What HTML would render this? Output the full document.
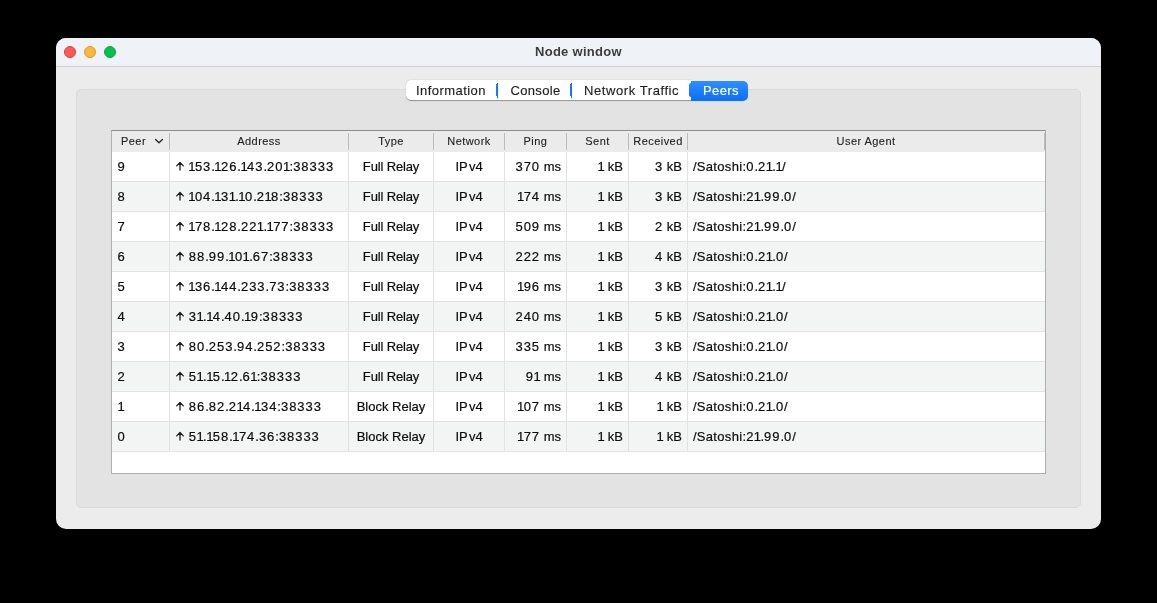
<!DOCTYPE html>
<html><head><meta charset="utf-8">
<style>
*{margin:0;padding:0;box-sizing:border-box}
html,body{width:1157px;height:603px;background:#000;overflow:hidden;font-family:"Liberation Sans",sans-serif}
.win{will-change:transform}
.win{position:absolute;left:56px;top:38px;width:1045px;height:491px;border-radius:10px;background:#ececec;overflow:hidden}
.tb{position:absolute;left:0;top:0;width:1045px;height:29px;background:#eff2f7;border-bottom:1px solid #cfcfcf}
.tl{position:absolute;top:8px;width:12px;height:12px;border-radius:50%}
.title{position:absolute;left:479px;top:6px;font-weight:bold;font-size:13px;color:#3c3c3c;line-height:16px;letter-spacing:.28px;white-space:nowrap}
.grp{position:absolute;left:20px;top:51px;width:1005px;height:419px;border-radius:5px;background:#e3e3e3;border:1px solid #dadada}
.tabs{position:absolute;left:350px;top:42px;width:342px;height:20px}
.tabbg{position:absolute;left:0;top:0;width:286px;height:20px;background:#fff;border-radius:5px 0 0 5px;box-shadow:0 0.5px 1px rgba(0,0,0,.35)}
.tab{position:absolute;top:1px;height:20px;line-height:20px;font-size:13px;color:#1e1e1e;-webkit-text-stroke:.15px currentColor;white-space:nowrap}
.sel{position:absolute;left:285px;top:1px;width:57px;height:20px;border-radius:0 5px 5px 0;background:linear-gradient(#2f8efe,#0b6ffa)}
.bump{position:absolute;left:283px;top:3px;width:3px;height:14px;border-radius:2px 0 0 2px;background:linear-gradient(#2a8afe,#0e71fa)}
.sepa{position:absolute;top:2.5px;width:1px;height:15px;background:#0f74f8}
.sepb{position:absolute;top:4px;width:1px;height:11.5px;background:#1f7cf8}
.sepg{position:absolute;top:0;width:1px;height:20px;background:#e4e4e4}
.tbl{position:absolute;left:55px;top:92px;width:935px;height:344px;background:#fff;border:1px solid #afafaf;border-top-color:#8c8c8c}
.hdr{position:absolute;left:0;top:0;width:933px;height:21px;background:#ebebeb}
.h{position:absolute;top:0;height:20px;line-height:20px;font-size:11px;color:#1f1f1f;-webkit-text-stroke:.12px #1f1f1f;text-align:center;letter-spacing:.45px;white-space:nowrap}
.hl{text-align:left;padding-left:9px}
.chev{position:absolute;left:42px;top:7px}
.hs{position:absolute;top:2px;width:1px;height:17px;background:#bcbcbc}
.row{position:absolute;left:0;width:933px;height:30px;border-bottom:1px solid #e3e3e3;background:#fff}
.row.alt{background:#f3f4f4}
.c{position:absolute;top:0;height:29px;line-height:29px;font-size:13px;color:#0c0c0c;-webkit-text-stroke:.2px #0c0c0c;white-space:nowrap;padding:0 5px}
.al{text-align:left}.ar{text-align:right}.ac{text-align:center}
.vg{position:absolute;top:21px;width:1px;height:300px;background:#e3e3e3}
.up{position:absolute;left:5px;top:9px}
b{font-weight:normal}
.d{letter-spacing:.95px}
.o{letter-spacing:-.6px;margin-left:-.55px}
.sa{letter-spacing:.37px}
.fr{letter-spacing:-.15px}
.v4{margin-left:1.2px}
</style></head><body>
<div class="win">
  <div class="tb">
    <div class="tl" style="left:8px;background:#fe5a55;border:0.5px solid #e03c36"></div>
    <div class="tl" style="left:28px;background:#fdb73c;border:0.5px solid #de9a1e"></div>
    <div class="tl" style="left:48px;background:#03c24f;border:0.5px solid #04a83d"></div>
    <div class="title">Node window</div>
  </div>
  <div class="grp"></div>
  <div class="tabs">
    <div class="tabbg"></div>
    <div class="tab" style="left:10px;letter-spacing:.45px">Information</div>
    <div class="sepg" style="left:91px"></div><div class="sepb" style="left:90px"></div><div class="sepa" style="left:91px"></div>
    <div class="tab" style="left:104.5px;letter-spacing:.33px">Console</div>
    <div class="sepg" style="left:165px"></div><div class="sepb" style="left:164px"></div><div class="sepa" style="left:165px"></div>
    <div class="tab" style="left:178px;letter-spacing:.58px">Network Traffic</div>
    <div class="bump"></div><div class="sel"></div>
    <div class="tab" style="left:297px;color:#fff;letter-spacing:.4px">Peers</div>
  </div>
  <div class="tbl">
    <div class="hdr"><div class="h hl" style="left:0px;width:57px">Peer</div><svg class="chev" width="10" height="7" viewBox="0 0 10 7"><path d="M1.6 1.5L5 4.7 8.4 1.5" fill="none" stroke="#2a2a2a" stroke-width="1.4" stroke-linecap="round" stroke-linejoin="round"/></svg><div class="h" style="left:58px;width:178px">Address</div><div class="h" style="left:237px;width:84px">Type</div><div class="h" style="left:322px;width:70px">Network</div><div class="h" style="left:393px;width:61px">Ping</div><div class="h" style="left:455px;width:61px">Sent</div><div class="h" style="left:517px;width:58px">Received</div><div class="h" style="left:576px;width:356px">User Agent</div><div class="hs" style="left:57px"></div><div class="hs" style="left:236px"></div><div class="hs" style="left:321px"></div><div class="hs" style="left:392px"></div><div class="hs" style="left:454px"></div><div class="hs" style="left:516px"></div><div class="hs" style="left:575px"></div><div class="hs" style="left:932px"></div></div>
    <div class="row" style="top:21px"><div class="c al" style="left:0px;width:57px;padding-left:5.5px">9</div><div class="c al" style="left:58px;width:178px;padding-left:18.8px"><svg class="up" width="10" height="11" viewBox="0 0 10 11"><path d="M5 1.8V9.1M1.7 4.9L5 1.5 8.3 4.9" fill="none" stroke="#1a1a1a" stroke-width="1.3" stroke-linecap="round" stroke-linejoin="round"/></svg><b class="o">1</b><b class="d">53</b>.<b class="o">1</b><b class="d">26</b>.<b class="o">1</b><b class="d">43</b>.<b class="d">20</b><b class="o">1</b>:<b class="d">38333</b></div><div class="c ac" style="left:237px;width:84px"><span class="fr">Full Relay</span></div><div class="c ac" style="left:322px;width:70px">IP<span class="v4">v4</span></div><div class="c ar" style="left:393px;width:61px"><b class="d">370</b> ms</div><div class="c ar" style="left:455px;width:61px"><b class="o">1</b> kB</div><div class="c ar" style="left:517px;width:58px"><b class="d">3</b> kB</div><div class="c al" style="left:576px;width:356px">/<span class="sa">Satoshi</span>:<b class="d">0</b>.<b class="d">2</b><b class="o">1</b>.<b class="o">1</b>/</div></div><div class="row alt" style="top:51px"><div class="c al" style="left:0px;width:57px;padding-left:5.5px">8</div><div class="c al" style="left:58px;width:178px;padding-left:18.8px"><svg class="up" width="10" height="11" viewBox="0 0 10 11"><path d="M5 1.8V9.1M1.7 4.9L5 1.5 8.3 4.9" fill="none" stroke="#1a1a1a" stroke-width="1.3" stroke-linecap="round" stroke-linejoin="round"/></svg><b class="o">1</b><b class="d">04</b>.<b class="o">1</b><b class="d">3</b><b class="o">1</b>.<b class="o">1</b><b class="d">0</b>.<b class="d">2</b><b class="o">1</b><b class="d">8</b>:<b class="d">38333</b></div><div class="c ac" style="left:237px;width:84px"><span class="fr">Full Relay</span></div><div class="c ac" style="left:322px;width:70px">IP<span class="v4">v4</span></div><div class="c ar" style="left:393px;width:61px"><b class="o">1</b><b class="d">74</b> ms</div><div class="c ar" style="left:455px;width:61px"><b class="o">1</b> kB</div><div class="c ar" style="left:517px;width:58px"><b class="d">3</b> kB</div><div class="c al" style="left:576px;width:356px">/<span class="sa">Satoshi</span>:<b class="d">2</b><b class="o">1</b>.<b class="d">99</b>.<b class="d">0</b>/</div></div><div class="row" style="top:81px"><div class="c al" style="left:0px;width:57px;padding-left:5.5px">7</div><div class="c al" style="left:58px;width:178px;padding-left:18.8px"><svg class="up" width="10" height="11" viewBox="0 0 10 11"><path d="M5 1.8V9.1M1.7 4.9L5 1.5 8.3 4.9" fill="none" stroke="#1a1a1a" stroke-width="1.3" stroke-linecap="round" stroke-linejoin="round"/></svg><b class="o">1</b><b class="d">78</b>.<b class="o">1</b><b class="d">28</b>.<b class="d">22</b><b class="o">1</b>.<b class="o">1</b><b class="d">77</b>:<b class="d">38333</b></div><div class="c ac" style="left:237px;width:84px"><span class="fr">Full Relay</span></div><div class="c ac" style="left:322px;width:70px">IP<span class="v4">v4</span></div><div class="c ar" style="left:393px;width:61px"><b class="d">509</b> ms</div><div class="c ar" style="left:455px;width:61px"><b class="o">1</b> kB</div><div class="c ar" style="left:517px;width:58px"><b class="d">2</b> kB</div><div class="c al" style="left:576px;width:356px">/<span class="sa">Satoshi</span>:<b class="d">2</b><b class="o">1</b>.<b class="d">99</b>.<b class="d">0</b>/</div></div><div class="row alt" style="top:111px"><div class="c al" style="left:0px;width:57px;padding-left:5.5px">6</div><div class="c al" style="left:58px;width:178px;padding-left:18.8px"><svg class="up" width="10" height="11" viewBox="0 0 10 11"><path d="M5 1.8V9.1M1.7 4.9L5 1.5 8.3 4.9" fill="none" stroke="#1a1a1a" stroke-width="1.3" stroke-linecap="round" stroke-linejoin="round"/></svg><b class="d">88</b>.<b class="d">99</b>.<b class="o">1</b><b class="d">0</b><b class="o">1</b>.<b class="d">67</b>:<b class="d">38333</b></div><div class="c ac" style="left:237px;width:84px"><span class="fr">Full Relay</span></div><div class="c ac" style="left:322px;width:70px">IP<span class="v4">v4</span></div><div class="c ar" style="left:393px;width:61px"><b class="d">222</b> ms</div><div class="c ar" style="left:455px;width:61px"><b class="o">1</b> kB</div><div class="c ar" style="left:517px;width:58px"><b class="d">4</b> kB</div><div class="c al" style="left:576px;width:356px">/<span class="sa">Satoshi</span>:<b class="d">0</b>.<b class="d">2</b><b class="o">1</b>.<b class="d">0</b>/</div></div><div class="row" style="top:141px"><div class="c al" style="left:0px;width:57px;padding-left:5.5px">5</div><div class="c al" style="left:58px;width:178px;padding-left:18.8px"><svg class="up" width="10" height="11" viewBox="0 0 10 11"><path d="M5 1.8V9.1M1.7 4.9L5 1.5 8.3 4.9" fill="none" stroke="#1a1a1a" stroke-width="1.3" stroke-linecap="round" stroke-linejoin="round"/></svg><b class="o">1</b><b class="d">36</b>.<b class="o">1</b><b class="d">44</b>.<b class="d">233</b>.<b class="d">73</b>:<b class="d">38333</b></div><div class="c ac" style="left:237px;width:84px"><span class="fr">Full Relay</span></div><div class="c ac" style="left:322px;width:70px">IP<span class="v4">v4</span></div><div class="c ar" style="left:393px;width:61px"><b class="o">1</b><b class="d">96</b> ms</div><div class="c ar" style="left:455px;width:61px"><b class="o">1</b> kB</div><div class="c ar" style="left:517px;width:58px"><b class="d">3</b> kB</div><div class="c al" style="left:576px;width:356px">/<span class="sa">Satoshi</span>:<b class="d">0</b>.<b class="d">2</b><b class="o">1</b>.<b class="o">1</b>/</div></div><div class="row alt" style="top:171px"><div class="c al" style="left:0px;width:57px;padding-left:5.5px">4</div><div class="c al" style="left:58px;width:178px;padding-left:18.8px"><svg class="up" width="10" height="11" viewBox="0 0 10 11"><path d="M5 1.8V9.1M1.7 4.9L5 1.5 8.3 4.9" fill="none" stroke="#1a1a1a" stroke-width="1.3" stroke-linecap="round" stroke-linejoin="round"/></svg><b class="d">3</b><b class="o">1</b>.<b class="o">1</b><b class="d">4</b>.<b class="d">40</b>.<b class="o">1</b><b class="d">9</b>:<b class="d">38333</b></div><div class="c ac" style="left:237px;width:84px"><span class="fr">Full Relay</span></div><div class="c ac" style="left:322px;width:70px">IP<span class="v4">v4</span></div><div class="c ar" style="left:393px;width:61px"><b class="d">240</b> ms</div><div class="c ar" style="left:455px;width:61px"><b class="o">1</b> kB</div><div class="c ar" style="left:517px;width:58px"><b class="d">5</b> kB</div><div class="c al" style="left:576px;width:356px">/<span class="sa">Satoshi</span>:<b class="d">0</b>.<b class="d">2</b><b class="o">1</b>.<b class="d">0</b>/</div></div><div class="row" style="top:201px"><div class="c al" style="left:0px;width:57px;padding-left:5.5px">3</div><div class="c al" style="left:58px;width:178px;padding-left:18.8px"><svg class="up" width="10" height="11" viewBox="0 0 10 11"><path d="M5 1.8V9.1M1.7 4.9L5 1.5 8.3 4.9" fill="none" stroke="#1a1a1a" stroke-width="1.3" stroke-linecap="round" stroke-linejoin="round"/></svg><b class="d">80</b>.<b class="d">253</b>.<b class="d">94</b>.<b class="d">252</b>:<b class="d">38333</b></div><div class="c ac" style="left:237px;width:84px"><span class="fr">Full Relay</span></div><div class="c ac" style="left:322px;width:70px">IP<span class="v4">v4</span></div><div class="c ar" style="left:393px;width:61px"><b class="d">335</b> ms</div><div class="c ar" style="left:455px;width:61px"><b class="o">1</b> kB</div><div class="c ar" style="left:517px;width:58px"><b class="d">3</b> kB</div><div class="c al" style="left:576px;width:356px">/<span class="sa">Satoshi</span>:<b class="d">0</b>.<b class="d">2</b><b class="o">1</b>.<b class="d">0</b>/</div></div><div class="row alt" style="top:231px"><div class="c al" style="left:0px;width:57px;padding-left:5.5px">2</div><div class="c al" style="left:58px;width:178px;padding-left:18.8px"><svg class="up" width="10" height="11" viewBox="0 0 10 11"><path d="M5 1.8V9.1M1.7 4.9L5 1.5 8.3 4.9" fill="none" stroke="#1a1a1a" stroke-width="1.3" stroke-linecap="round" stroke-linejoin="round"/></svg><b class="d">5</b><b class="o">1</b>.<b class="o">1</b><b class="d">5</b>.<b class="o">1</b><b class="d">2</b>.<b class="d">6</b><b class="o">1</b>:<b class="d">38333</b></div><div class="c ac" style="left:237px;width:84px"><span class="fr">Full Relay</span></div><div class="c ac" style="left:322px;width:70px">IP<span class="v4">v4</span></div><div class="c ar" style="left:393px;width:61px"><b class="d">9</b><b class="o">1</b> ms</div><div class="c ar" style="left:455px;width:61px"><b class="o">1</b> kB</div><div class="c ar" style="left:517px;width:58px"><b class="d">4</b> kB</div><div class="c al" style="left:576px;width:356px">/<span class="sa">Satoshi</span>:<b class="d">0</b>.<b class="d">2</b><b class="o">1</b>.<b class="d">0</b>/</div></div><div class="row" style="top:261px"><div class="c al" style="left:0px;width:57px;padding-left:5.5px">1</div><div class="c al" style="left:58px;width:178px;padding-left:18.8px"><svg class="up" width="10" height="11" viewBox="0 0 10 11"><path d="M5 1.8V9.1M1.7 4.9L5 1.5 8.3 4.9" fill="none" stroke="#1a1a1a" stroke-width="1.3" stroke-linecap="round" stroke-linejoin="round"/></svg><b class="d">86</b>.<b class="d">82</b>.<b class="d">2</b><b class="o">1</b><b class="d">4</b>.<b class="o">1</b><b class="d">34</b>:<b class="d">38333</b></div><div class="c ac" style="left:237px;width:84px">Block Relay</div><div class="c ac" style="left:322px;width:70px">IP<span class="v4">v4</span></div><div class="c ar" style="left:393px;width:61px"><b class="o">1</b><b class="d">07</b> ms</div><div class="c ar" style="left:455px;width:61px"><b class="o">1</b> kB</div><div class="c ar" style="left:517px;width:58px"><b class="o">1</b> kB</div><div class="c al" style="left:576px;width:356px">/<span class="sa">Satoshi</span>:<b class="d">0</b>.<b class="d">2</b><b class="o">1</b>.<b class="d">0</b>/</div></div><div class="row alt" style="top:291px"><div class="c al" style="left:0px;width:57px;padding-left:5.5px">0</div><div class="c al" style="left:58px;width:178px;padding-left:18.8px"><svg class="up" width="10" height="11" viewBox="0 0 10 11"><path d="M5 1.8V9.1M1.7 4.9L5 1.5 8.3 4.9" fill="none" stroke="#1a1a1a" stroke-width="1.3" stroke-linecap="round" stroke-linejoin="round"/></svg><b class="d">5</b><b class="o">1</b>.<b class="o">1</b><b class="d">58</b>.<b class="o">1</b><b class="d">74</b>.<b class="d">36</b>:<b class="d">38333</b></div><div class="c ac" style="left:237px;width:84px">Block Relay</div><div class="c ac" style="left:322px;width:70px">IP<span class="v4">v4</span></div><div class="c ar" style="left:393px;width:61px"><b class="o">1</b><b class="d">77</b> ms</div><div class="c ar" style="left:455px;width:61px"><b class="o">1</b> kB</div><div class="c ar" style="left:517px;width:58px"><b class="o">1</b> kB</div><div class="c al" style="left:576px;width:356px">/<span class="sa">Satoshi</span>:<b class="d">2</b><b class="o">1</b>.<b class="d">99</b>.<b class="d">0</b>/</div></div>
    <div class="vg" style="left:57px"></div><div class="vg" style="left:236px"></div><div class="vg" style="left:321px"></div><div class="vg" style="left:392px"></div><div class="vg" style="left:454px"></div><div class="vg" style="left:516px"></div><div class="vg" style="left:575px"></div>
  </div>
</div>
</body></html>
